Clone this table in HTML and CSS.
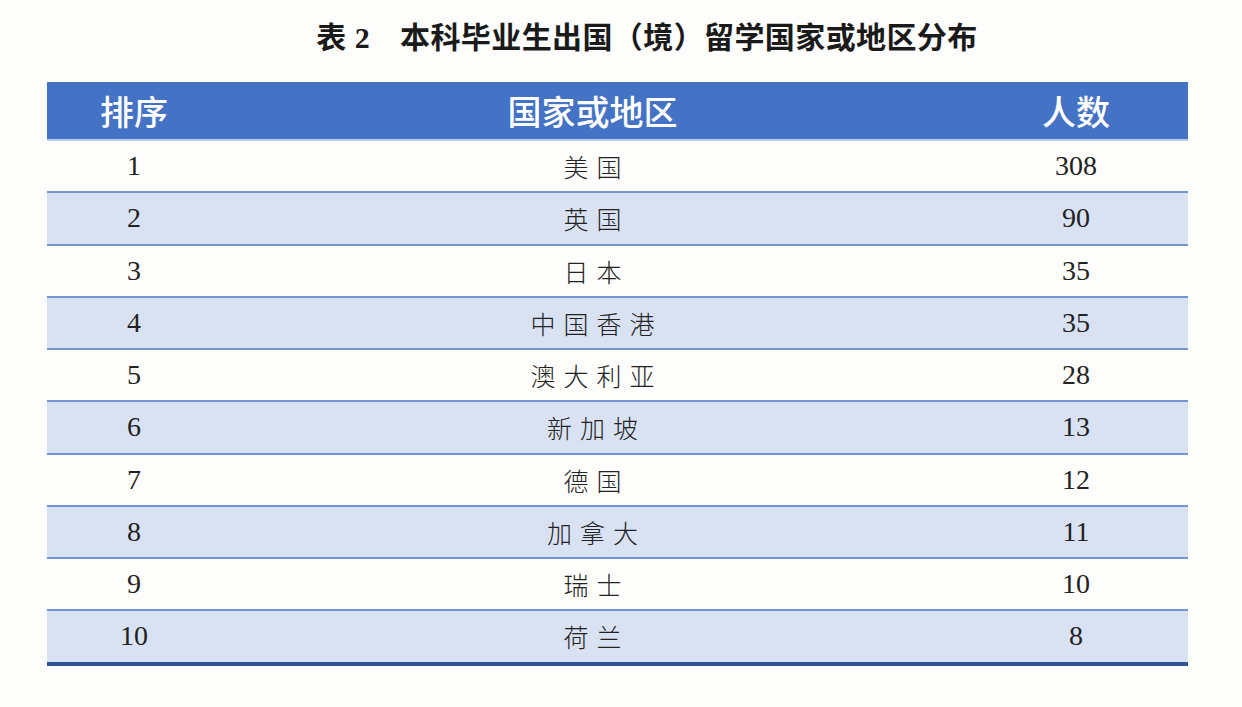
FILE: index.html
```html
<!DOCTYPE html>
<html lang="zh">
<head>
<meta charset="utf-8">
<link rel="stylesheet" href="styles.css">
</head>
<body>
<div class="page">
  <h1 class="title"><span class="tno">表 2</span><span>本科毕业生出国（境）留学国家或地区分布</span></h1>
  <table class="tbl">
    <colgroup><col class="c1"><col class="c2"><col class="c3"></colgroup>
    <thead>
      <tr><th class="th1">排序</th><th>国家或地区</th><th>人数</th></tr>
    </thead>
    <tbody>
      <tr><td>1</td><td class="cn">美国</td><td>308</td></tr>
      <tr class="alt"><td>2</td><td class="cn">英国</td><td>90</td></tr>
      <tr><td>3</td><td class="cn">日本</td><td>35</td></tr>
      <tr class="alt"><td>4</td><td class="cn">中国香港</td><td>35</td></tr>
      <tr><td>5</td><td class="cn">澳大利亚</td><td>28</td></tr>
      <tr class="alt"><td>6</td><td class="cn">新加坡</td><td>13</td></tr>
      <tr><td>7</td><td class="cn">德国</td><td>12</td></tr>
      <tr class="alt"><td>8</td><td class="cn">加拿大</td><td>11</td></tr>
      <tr><td>9</td><td class="cn">瑞士</td><td>10</td></tr>
      <tr class="alt last"><td>10</td><td class="cn">荷兰</td><td>8</td></tr>
    </tbody>
  </table>
</div>
</body>
</html>
```
FILE: styles.css
```css
html, body { margin: 0; padding: 0; background: #fdfdfb; }
.page {
  width: 1242px;
  height: 707px;
  padding-top: 18px;
  box-sizing: border-box;
}
.title {
  margin: 0;
  height: 64px;
  text-align: center;
  font-family: "Liberation Serif", "Noto Sans CJK SC", serif;
  font-weight: 700;
  font-size: 30px;
  line-height: 40px;
  letter-spacing: 0.4px;
  color: #1a1a1a;
  padding-left: 52px;
}
.tno { margin-right: 30px; }
.tbl {
  margin-left: 47px;
  width: 1141px;
  border-collapse: collapse;
  table-layout: fixed;
  font-family: "Liberation Serif", "Noto Sans CJK SC", serif;
  color: #222;
}
.c1 { width: 174px; }
.c3 { width: 224px; }
.tbl th {
  background: #4472c4;
  color: #fff;
  height: 57px;
  padding: 0;
  font-family: "Noto Sans CJK SC", sans-serif;
  font-weight: 500;
  font-size: 34px;
  text-align: center;
  border-bottom: 2px solid #b8c9e8;
}
.tbl td {
  height: 50.25px;
  padding: 0;
  text-align: center;
  font-size: 28px;
  border-bottom: 2px solid #7396d2;
}
.tbl td.cn {
  font-size: 25px;
  letter-spacing: 8px;
  text-indent: 8px;
  font-weight: 300;
}
.tbl tr.alt td { background: #d9e2f3; }
.tbl tr.last td { border-bottom: 4px solid #2f5496; }
```
